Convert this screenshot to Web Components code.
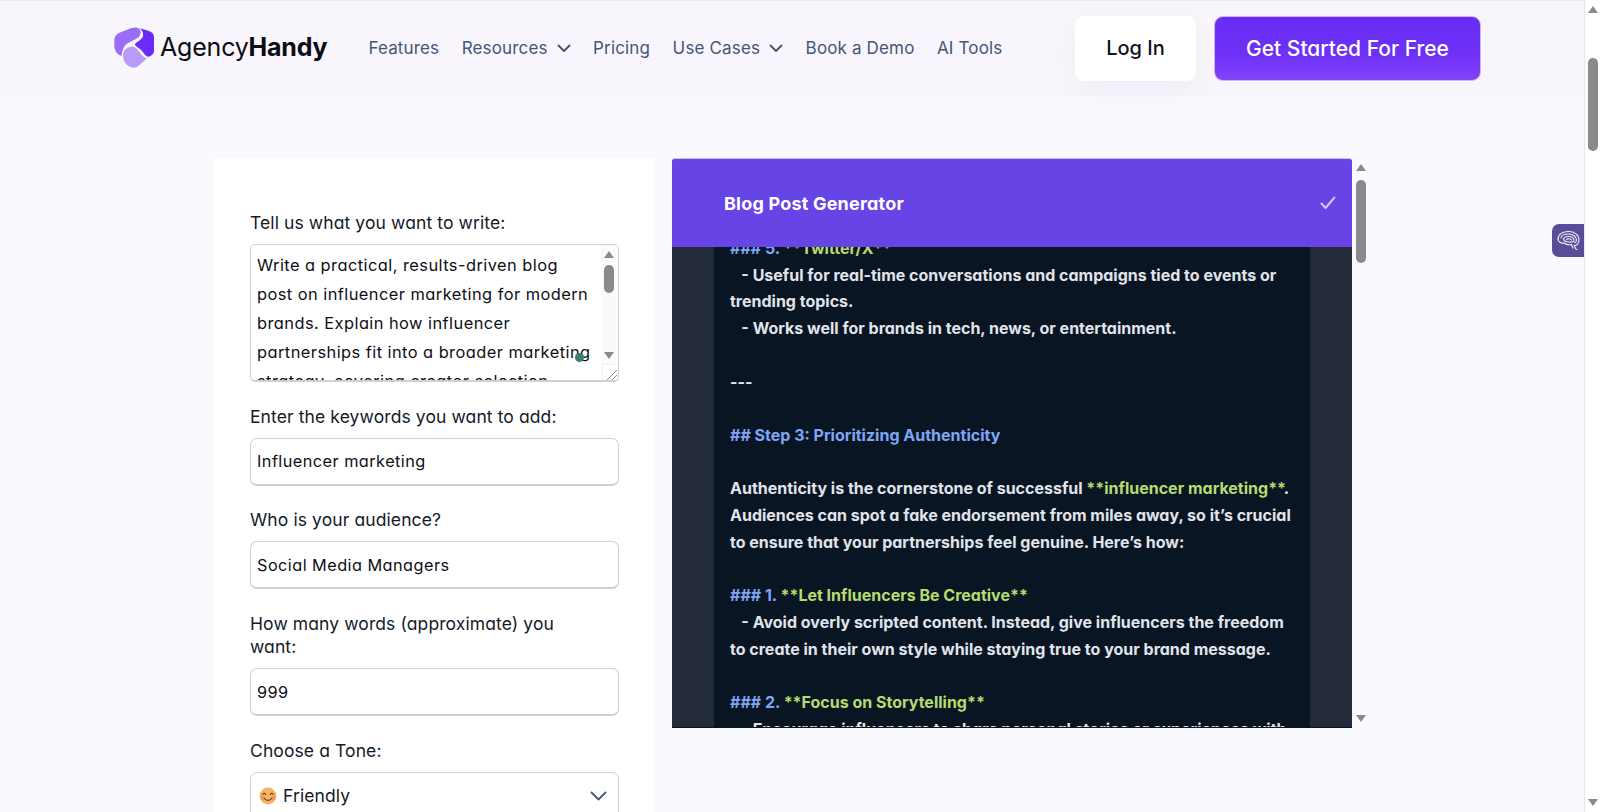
<!DOCTYPE html>
<html lang="en">
<head>
<meta charset="utf-8">
<title>Blog Post Generator</title>
<style>
html, body { margin: 0; height: 812px; overflow: hidden; background: #faf9fe; }
body { font-family: Inter, "Liberation Sans", sans-serif; }
</style>
</head>
<body>
<ah-page>
  <ah-header slot="header"></ah-header>
  <ah-form slot="left">
    <ah-field label="Tell us what you want to write:">
      <ah-textarea>Write a practical, results-driven blog post on influencer marketing for modern brands. Explain how influencer partnerships fit into a broader marketing strategy, covering creator selection</ah-textarea>
    </ah-field>
    <ah-field label="Enter the keywords you want to add:"><ah-input>Influencer marketing</ah-input></ah-field>
    <ah-field label="Who is your audience?"><ah-input>Social Media Managers</ah-input></ah-field>
    <ah-field label="How many words (approximate) you want:"><ah-input>999</ah-input></ah-field>
    <ah-field label="Choose a Tone:"><ah-select>Friendly</ah-select></ah-field>
  </ah-form>
  <ah-output slot="right" title-text="Blog Post Generator"><span class="b">### 5. </span><span class="g">**Twitter/X**</span>
   - Useful for real-time conversations and campaigns tied to events or
trending topics.
   - Works well for brands in tech, news, or entertainment.

---

<span class="b">## Step 3: Prioritizing Authenticity</span>

Authenticity is the cornerstone of successful <span class="g">**influencer marketing**</span>.
Audiences can spot a fake endorsement from miles away, so it’s crucial
to ensure that your partnerships feel genuine. Here’s how:

<span class="b">### 1. </span><span class="g">**Let Influencers Be Creative**</span>
   - Avoid overly scripted content. Instead, give influencers the freedom
to create in their own style while staying true to your brand message.

<span class="b">### 2. </span><span class="g">**Focus on Storytelling**</span>
   - Encourage influencers to share personal stories or experiences with</ah-output>
</ah-page>

<script>
const FONT = 'Inter, "Liberation Sans", sans-serif';

function define(name, html, setup) {
  const tmpl = document.createElement("template");
  tmpl.innerHTML = html;
  customElements.define(name, class extends HTMLElement {
    constructor() {
      super();
      this.attachShadow({ mode: "open" }).appendChild(tmpl.content.cloneNode(true));
    }
    connectedCallback() {
      if (setup) setup(this, this.shadowRoot);
    }
  });
}

define("ah-page", `
<style>
:host { display: flex; flex-direction: column; height: 812px; position: relative; overflow: hidden; }
.main { display: flex; align-items: flex-start; padding: 62px 0 0 214px; gap: 17px; flex: 1; min-height: 0; }
.tab { position: absolute; left: 1552px; top: 224px; width: 32px; height: 33px; background: #5b4c98; border-radius: 7px 0 0 7px; display: flex; align-items: center; justify-content: center; }
.pagebar { position: absolute; right: 0; top: 0; bottom: 0; }
</style>
<slot name="header"></slot>
<div class="main"><slot name="left"></slot><slot name="right"></slot></div>
<div class="tab">
  <svg width="25" height="25" viewBox="0 0 25 25" fill="none" stroke="#f2effa" stroke-width="1.1" stroke-linecap="round">
    <path d="M2 11C2 6 7 3.500 12.500 3.500C18.500 3.500 23 7 23 12C23 15.500 20.500 17.500 18.500 17.500L19.500 20.500C20 21.500 21 21.500 21 21.500"/>
    <path d="M2 11C2 14 5 15.500 8 15C10 16.500 13 17 15.500 16.500L17 20"/>
    <path d="M5 10C5 7.500 8.500 6 12.500 6C17 6 20.500 8.500 20.500 12C20.500 13.500 19.500 14.500 18.500 14.800"/>
    <path d="M7.500 11.500C7.500 9.500 10 8.500 12.500 8.500C15.500 8.500 18 10 18 12.500C18 13.500 16 14.500 13 14C10.500 13.800 8.500 13.500 7.500 11.500Z"/>
    <path d="M10.500 11.300C12 10.500 14.500 10.800 15.500 12"/>
  </svg>
</div>
<ah-scrollbar class="pagebar" style="--w:16px;--up:6px;--thumb-top:58px;--thumb-h:93px;--edge:1px solid #e6e6ea;--bg:#fff"></ah-scrollbar>
`);

define("ah-header", `
<style>
:host { display: flex; align-items: center; height: 96px; box-sizing: border-box; border-top: 1px solid #ececef; border-bottom: 1px solid #f4f2f9; background: #f8f6fc; padding: 0 119px 0 114px; font-family: ${FONT}; font-feature-settings: "cv11"; }
.logo { display: flex; align-items: center; gap: 6px; margin-right: 41px; font-size: 25px; color: #0c0c12; letter-spacing: -0.2px; font-feature-settings: normal; margin-top: -2px; }
.logo b { font-weight: 700; }
nav { display: flex; align-items: center; gap: 22.500px; font-size: 17px; color: #46557a; flex: 1; font-feature-settings: normal; letter-spacing: 0.15px; }
nav span { display: flex; align-items: center; gap: 9px; white-space: nowrap; }
.btn { display: flex; align-items: center; justify-content: center; height: 65px; box-sizing: border-box; border-radius: 9px; font-size: 20px; font-weight: 500; }
.login { width: 121px; background: #fff; color: #10121f; margin-right: 18px; box-shadow: 0 8px 24px rgba(80, 60, 140, 0.06); }
.start { width: 267px; color: #fff; font-size: 21px; background: linear-gradient(180deg, #682cf5 0%, #6e30f6 60%, #8344f9 100%); border: 1px solid #c9b8f7; }
</style>
<div class="logo">
  <svg width="40" height="41" viewBox="0 0 40 41">
    <path fill="#9b6cf9" d="M21 .500C25.500 .200 28 4 26 8C23.500 13 16 13.500 11.500 18C9 20.500 8 25 7.500 29C3 27.500 .500 23.500 .300 19L.300 13C.500 9 2.500 7 6 5.500L15 2C17.500 1 19.500 .600 21 .500Z"/>
    <path fill="#6a2bf5" d="M26 1.200L35 4C38 5 40 7 40 10.500L40 23.500C40 27 37.500 29.500 33.500 29.800C30.500 28 29 24.500 26 22C23 19.500 20.500 18.500 21 17C23 14.500 26.500 13.500 28.500 10.500C30 7.500 29 4 26 1.200Z"/>
    <path fill="#b99af9" d="M9 29C9 23 13.500 19.500 18 19.500C22.500 19.800 24.500 24 27 27C28.500 29 30.500 30.500 33 31.500C30 34 26 38 22.500 40C20 41 17 40.500 14.500 39C11.500 37 9.500 34 9 29Z"/>
  </svg>
  <div>Agency<b>Handy</b></div>
</div>
<nav>
  <span>Features</span>
  <span>Resources <ah-chevron></ah-chevron></span>
  <span>Pricing</span>
  <span>Use Cases <ah-chevron></ah-chevron></span>
  <span>Book a Demo</span>
  <span>AI Tools</span>
</nav>
<div class="btn login">Log In</div>
<div class="btn start">Get Started For Free</div>
`);

define("ah-chevron", `
<style>:host { display: inline-flex; }</style>
<svg width="14" height="9" viewBox="0 0 14 9" fill="none" stroke="#44536f" stroke-width="1.800" stroke-linecap="round" stroke-linejoin="round"><path d="M1.500 1.500L7 7L12.500 1.500"/></svg>
`);

define("ah-form", `
<style>
:host { display: flex; flex-direction: column; gap: 22.500px; width: 441px; height: 700px; box-sizing: border-box; padding: 53px 36px 0 36px; background: #fff; font-family: ${FONT}; font-feature-settings: "cv11"; }
</style>
<slot></slot>
`);

define("ah-field", `
<style>
:host { display: block; }
label { display: block; max-width: 340px; font-size: 17.500px; line-height: 23.500px; color: #141a2b; margin-bottom: 9.500px; letter-spacing: 0.1px; }
</style>
<label></label>
<slot></slot>
`, (el, root) => { root.querySelector("label").textContent = el.getAttribute("label"); });

define("ah-input", `
<style>
:host { display: flex; align-items: center; height: 48px; box-sizing: border-box; padding: 0 6px; border: 1px solid #cfd0d3; border-bottom-width: 2px; border-radius: 7px; background: #fff; font-size: 16.300px; color: #0d0f18; letter-spacing: 0.45px; white-space: nowrap; }
</style>
<slot></slot>
`);

define("ah-select", `
<style>
:host { display: flex; align-items: center; gap: 6px; height: 48px; box-sizing: border-box; padding: 0 10px 0 8px; border: 1px solid #cfd0d3; border-radius: 7px; background: #fff; font-size: 17.500px; color: #141a2b; letter-spacing: 0.1px; }
span { flex: 1; }
svg.c { width: 17px; height: 10px; margin-right: 1px; }
</style>
<svg width="18" height="18" viewBox="0 0 18 18">
  <circle cx="9" cy="9" r="8.500" fill="#f5b461"/>
  <circle cx="4" cy="11" r="2" fill="#ec8f70"/><circle cx="14" cy="11" r="2" fill="#ec8f70"/>
  <path d="M3.800 7.500C4.500 6 6 6 6.800 7.500M11.200 7.500C12 6 13.500 6 14.200 7.500" fill="none" stroke="#6b4420" stroke-width="1.100" stroke-linecap="round"/>
  <path d="M5.500 11.500C7 14 11 14 12.500 11.500" fill="none" stroke="#6b4420" stroke-width="1.200" stroke-linecap="round"/>
</svg>
<span><slot></slot></span>
<svg class="c" viewBox="0 0 17 10" fill="none" stroke="#4b5872" stroke-width="1.800" stroke-linecap="round" stroke-linejoin="round"><path d="M1.500 1.500L8.500 8.500L15.500 1.500"/></svg>
`);

define("ah-textarea", `
<style>
:host { display: block; position: relative; height: 138px; box-sizing: border-box; border: 1px solid #cfd0d3; border-bottom-width: 2px; border-radius: 5px; background: #fff; overflow: hidden; }
.text { padding: 6px 21px 0 6px; font-size: 16.400px; line-height: 29px; color: #0d0f18; letter-spacing: 0.45px; }
.dot { position: absolute; left: 324px; top: 108px; width: 9px; height: 9px; border-radius: 50%; background: #3f7f70; }
.bar { position: absolute; right: 1px; top: 0; bottom: 0; }
.grip { position: absolute; right: 0; bottom: 0; width: 16px; height: 16px; background: #fff; border-top: 1px solid #eee; border-left: 1px solid #f4f4f4; box-sizing: border-box; }
</style>
<div class="text"><slot></slot></div>
<div class="dot"></div>
<ah-scrollbar class="bar" style="--w:16px;--up:6px;--thumb-top:20px;--thumb-h:28px;--edge:0;--bg:#fafafa;--down:21px"></ah-scrollbar>
<div class="grip"><svg width="15" height="15" viewBox="0 0 15 15" stroke="#8b8b8b" fill="none"><path d="M4 14L14 4M9 14L14 9"/></svg></div>
`);

define("ah-scrollbar", `
<style>
:host { display: block; width: var(--w, 16px); box-sizing: border-box; background: var(--bg, transparent); border-left: var(--edge, 0); }
.wrap { position: relative; height: 100%; }
.up, .down { position: absolute; left: 50%; margin-left: -5px; width: 0; height: 0; border-left: 5px solid transparent; border-right: 5px solid transparent; }
.up { top: var(--up, 6px); border-bottom: 7px solid #8a8a8a; }
.down { bottom: var(--down, 6px); border-top: 7px solid #8a8a8a; }
.thumb { position: absolute; left: 50%; margin-left: -5px; width: 10px; top: var(--thumb-top); height: var(--thumb-h); background: #8a8a8a; border-radius: 5px; }
</style>
<div class="wrap"><div class="up"></div><div class="thumb"></div><div class="down"></div></div>
`);

define("ah-output", `
<style>
:host { display: flex; align-items: stretch; height: 570px; font-family: ${FONT}; font-feature-settings: "cv11"; }
.panel { width: 680px; display: flex; flex-direction: column; border-bottom: 1px solid #0a1523; }
.head { display: flex; align-items: center; justify-content: space-between; height: 89px; flex: none; box-sizing: border-box; padding: 0 16px 0 52px; background: #6644e6; border-top: 1px solid #c9bdf3; border-radius: 3px 3px 0 0; color: #fff; font-size: 18px; font-weight: 700; letter-spacing: 0.2px; }
.body { flex: 1; min-height: 0; overflow: hidden; background: #232b3b; padding: 0 42px; }
.inner { height: 100%; background: #0a1523; padding: 0 16px; overflow: hidden; }
pre { margin: -12px 0 0; font: inherit; font-size: 16px; font-weight: 700; line-height: 26.700px; color: #e1e4ea; white-space: pre; letter-spacing: 0; }
::slotted(.b) { color: #7fa6f5; }
::slotted(.g) { color: #b5dc6e; }
ah-scrollbar { width: 18px; height: 100%; --up:6px; --thumb-top:22px; --thumb-h:83px; margin-left: 0; }
</style>
<div class="panel">
  <div class="head"><span id="title"></span>
    <svg width="16" height="14" viewBox="0 0 16 14" fill="none" stroke="#cfc8ee" stroke-width="2" stroke-linecap="round" stroke-linejoin="round"><path d="M1.500 7.500L5.500 12L14.500 1.500"/></svg>
  </div>
  <div class="body"><div class="inner"><pre><slot></slot></pre></div></div>
</div>
<ah-scrollbar></ah-scrollbar>
`, (el, root) => { root.getElementById("title").textContent = el.getAttribute("title-text"); });
</script>
</body>
</html>
